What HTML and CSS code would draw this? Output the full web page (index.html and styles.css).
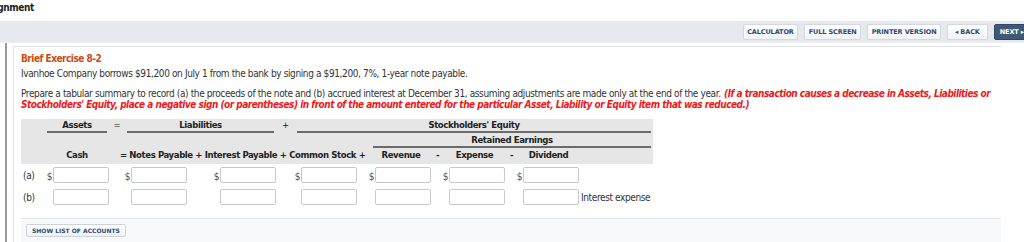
FILE: index.html
```html
<!DOCTYPE html>
<html lang="en">
<head>
    <meta charset="UTF-8">
    <title>Brief Exercise 8-2</title>
    <link rel="stylesheet" href="styles.css">
</head>
<body>
    <div class="app-title"><span class="app-title-text">Assignment</span></div>

    <div class="toolbar">
        <button class="tool-btn">Calculator</button>
        <button class="tool-btn">Full Screen</button>
        <button class="tool-btn">Printer Version</button>
        <button class="tool-btn back-btn">&#9666; Back</button>
        <button class="tool-btn next-btn">Next &#9656;</button>
    </div>

    <div class="workspace">
        <div class="panel">
            <h3 class="exercise-title">Brief Exercise 8-2</h3>
            <p class="prompt">Ivanhoe Company borrows $91,200 on July 1 from the bank by signing a $91,200, 7%, 1-year note payable.</p>
            <p class="prompt">Prepare a tabular summary to record (a) the proceeds of the note and (b) accrued interest at December 31, assuming adjustments are made only at the end of the year. <span class="note">(If a transaction causes a decrease in Assets, Liabilities or Stockholders' Equity, place a negative sign (or parentheses) in front of the amount entered for the particular Asset, Liability or Equity item that was reduced.)</span></p>

            <div class="summary-head summary-cols">
                <div class="hd hd-line" style="grid-column: 2 / 4">Assets</div>
                <div class="hd op" style="grid-column: 4">=</div>
                <div class="hd hd-line" style="grid-column: 5 / 10">Liabilities</div>
                <div class="hd op" style="grid-column: 10">+</div>
                <div class="hd hd-line" style="grid-column: 11 / 23">Stockholders' Equity</div>

                <div class="hd hd-line" style="grid-column: 14 / 23">Retained Earnings</div>

                <div class="hd" style="grid-column: 2 / 4">Cash</div>
                <div class="hd hd-run" style="grid-column: 4 / 14">= Notes Payable + Interest Payable + Common Stock +</div>
                <div class="hd" style="grid-column: 14 / 16">Revenue</div>
                <div class="hd" style="grid-column: 16">-</div>
                <div class="hd" style="grid-column: 17 / 19">Expense</div>
                <div class="hd" style="grid-column: 19">-</div>
                <div class="hd" style="grid-column: 20 / 22">Dividend</div>
            </div>

            <div class="summary-body summary-cols">
                <div class="row-label">(a)</div>
                <span class="dollar" style="grid-column: 2">$</span><input class="amount" style="grid-column: 3" type="text">
                <span class="dollar" style="grid-column: 5">$</span><input class="amount" style="grid-column: 6" type="text">
                <span class="dollar" style="grid-column: 8">$</span><input class="amount" style="grid-column: 9" type="text">
                <span class="dollar" style="grid-column: 11">$</span><input class="amount" style="grid-column: 12" type="text">
                <span class="dollar" style="grid-column: 14">$</span><input class="amount" style="grid-column: 15" type="text">
                <span class="dollar" style="grid-column: 17">$</span><input class="amount" style="grid-column: 18" type="text">
                <span class="dollar" style="grid-column: 20">$</span><input class="amount" style="grid-column: 21" type="text">

                <div class="row-label" style="grid-column: 1">(b)</div>
                <input class="amount" style="grid-column: 3" type="text">
                <input class="amount" style="grid-column: 6" type="text">
                <input class="amount" style="grid-column: 9" type="text">
                <input class="amount" style="grid-column: 12" type="text">
                <input class="amount" style="grid-column: 15" type="text">
                <input class="amount" style="grid-column: 18" type="text">
                <input class="amount" style="grid-column: 21" type="text">
                <span class="account-name" style="grid-column: 22">Interest expense</span>
            </div>

            <div class="accounts-bar">
                <button class="small-btn">Show List of Accounts</button>
            </div>
        </div>
    </div>
</body>
</html>
```

FILE: styles.css
```css
body {
    margin: 0;
    font-family: "DejaVu Sans Condensed", "DejaVu Sans", sans-serif;
    font-size: 10px;
    letter-spacing: -0.38px;
    color: #333;
    background: white;
    overflow: hidden;
}
.app-title {
    height: 21px;
    overflow: hidden;
}
.app-title-text {
    display: block;
    margin-left: -22px;
    padding-top: 2px;
    font-size: 10px;
    font-weight: bold;
    line-height: 12px;
    color: #222;
}
.toolbar {
    display: flex;
    justify-content: flex-end;
    align-items: center;
    gap: 6px;
    height: 21px;
    background: #e5e9ed;
    border-bottom: 1px solid #edf0f3;
    margin-right: -6px;
}
.tool-btn {
    height: 16px;
    padding: 0 3.5px;
    font-family: "DejaVu Sans", sans-serif;
    font-size: 6.5px;
    letter-spacing: -0.1px;
    font-weight: bold;
    text-transform: uppercase;
    color: #2d4a72;
    background: linear-gradient(#ffffff, #f1f3f6);
    border: 1px solid #d3d9e0;
    border-radius: 2px;
}
.back-btn {
    padding: 0 7px;
}
.next-btn {
    padding: 0 5px;
    color: white;
    background: #3f5874;
    border-color: #2f465f;
}
.workspace {
    margin-left: 5px;
    padding: 3px 0 0 6px;
    border-left: 2px solid #9a9a9a;
}
.panel {
    border-top: 1px solid #dfe3e8;
    border-left: 1px solid #dfe3e8;
    padding: 6px 0 0 7px;
    width: 980px;
}
.exercise-title {
    margin: 0;
    font-size: 10px;
    line-height: 11px;
    font-weight: bold;
    letter-spacing: -0.5px;
    color: #cc4b16;
}
.prompt {
    margin: 4px 0 9px;
    line-height: 11px;
}
.note {
    padding-left: 1px;
    color: #f01818;
    font-weight: bold;
    font-style: italic;
    letter-spacing: -0.5px;
}
.summary-cols {
    display: grid;
    grid-template-columns: 24px 8px 56px 16px 6px 56px 27px 6px 56px 19px 6px 56px 14px 4px 56px 13px 5px 56px 13px 5px 56px 74px;
    width: 632px;
}
.summary-head {
    margin-top: 9px;
    background: #e6e6e6;
    grid-auto-rows: 15px;
    font-size: 9.5px;
    font-weight: bold;
    letter-spacing: -0.4px;
    color: #222;
}
.hd {
    text-align: center;
    line-height: 12px;
    white-space: nowrap;
}
.hd-line {
    border-bottom: 2px solid #6a6a6a;
    margin: 0 2px 1px;
}
.hd-run {
    text-align: left;
    padding-left: 11px;
}
.op {
    font-weight: normal;
}
.summary-body {
    margin-top: 3px;
    grid-auto-rows: 16px;
    row-gap: 6px;
    align-items: end;
}
.row-label {
    grid-column: 1;
    align-self: center;
    padding-left: 2px;
}
.dollar {
    justify-self: end;
    padding-right: 1px;
    line-height: 12px;
    color: #555;
}
.amount {
    box-sizing: border-box;
    width: 56px;
    height: 16px;
    margin: 0;
    border: 1px solid #c9c9c9;
    border-radius: 2px;
    background: white;
}
.account-name {
    align-self: center;
    padding-left: 2px;
    white-space: nowrap;
}
.accounts-bar {
    margin-top: 13px;
    padding: 5px 5px;
    border-top: 1px solid #e3e6ea;
    border-bottom: 1px solid #e3e6ea;
    background: #f8f9fb;
}
.small-btn {
    height: 13px;
    padding: 0 5px;
    font-family: "DejaVu Sans", sans-serif;
    font-size: 6px;
    letter-spacing: 0;
    font-weight: bold;
    text-transform: uppercase;
    color: #2d4a72;
    background: linear-gradient(#ffffff, #eef1f5);
    border: 1px solid #cdd4dc;
    border-radius: 2px;
}
```
